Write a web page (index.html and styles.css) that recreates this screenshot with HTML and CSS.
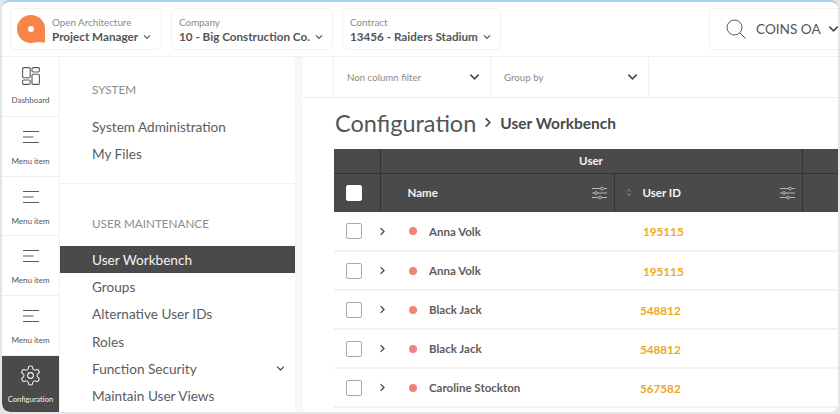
FILE: index.html
```html
<!DOCTYPE html>
<html lang="en">
<head>
    <meta charset="UTF-8">
    <title>Configuration - User Workbench</title>
    <link rel="stylesheet" href="styles.css">
</head>
<body>
    <svg class="defs" width="0" height="0">
        <symbol id="chev-down" viewBox="0 0 12 8"><path d="M1.5 1.5 6 6l4.5-4.5" fill="none" stroke="currentColor" stroke-width="1.8"/></symbol>
        <symbol id="chev-right" viewBox="0 0 8 12"><path d="M1.5 1.5 6 6l-4.5 4.5" fill="none" stroke="currentColor" stroke-width="1.8"/></symbol>
        <symbol id="burger" viewBox="0 0 18 14"><path d="M1 1.5h16M1 7h10.5M1 12.5h16" fill="none" stroke="currentColor" stroke-width="1.2"/></symbol>
        <symbol id="sliders" viewBox="0 0 15 14">
            <g fill="none" stroke="currentColor" stroke-width="1">
                <path d="M0 2.5h15M0 7h15M0 11.5h15"/>
                <circle cx="10" cy="2.5" r="1.4" fill="#4a4a4a"/>
                <circle cx="4" cy="7" r="1.4" fill="#4a4a4a"/>
                <circle cx="8" cy="11.5" r="1.4" fill="#4a4a4a"/>
            </g>
        </symbol>
    </svg>

    <div class="window">
        <header class="topbar">
            <div class="picker picker-role">
                <svg class="logo" viewBox="0 0 28 28">
                    <defs>
                        <radialGradient id="logoFade" cx="0.62" cy="1" r="0.5">
                            <stop offset="0" stop-color="#fff"/>
                            <stop offset="1" stop-color="#f98447"/>
                        </radialGradient>
                    </defs>
                    <path d="M0 14a14 14 0 0 1 28 0v14H14A14 14 0 0 1 0 14z" fill="#f98447"/>
                    <path d="M14 17v11h14v-1H19a6 6 0 0 1-5-10z" fill="url(#logoFade)"/>
                    <circle cx="14" cy="14" r="3" fill="#fff"/>
                </svg>
                <div class="picker-text">
                    <span class="picker-label">Open Architecture</span>
                    <span class="picker-value">Project Manager <svg class="chev"><use href="#chev-down"/></svg></span>
                </div>
            </div>
            <div class="picker picker-company">
                <div class="picker-text">
                    <span class="picker-label">Company</span>
                    <span class="picker-value">10 - Big Construction Co. <svg class="chev"><use href="#chev-down"/></svg></span>
                </div>
            </div>
            <div class="picker picker-contract">
                <div class="picker-text">
                    <span class="picker-label">Contract</span>
                    <span class="picker-value">13456 - Raiders Stadium <svg class="chev"><use href="#chev-down"/></svg></span>
                </div>
            </div>
            <div class="search">
                <svg class="search-icon" viewBox="0 0 20 20"><circle cx="8.5" cy="8.5" r="7.5" fill="none" stroke="currentColor" stroke-width="1"/><path d="m14 14 5.5 5.5" fill="none" stroke="currentColor" stroke-width="1"/></svg>
                <span class="search-text">COINS OA</span>
                <svg class="chev-lg"><use href="#chev-down"/></svg>
            </div>
        </header>

        <div class="body">
            <nav class="rail">
                <a class="rail-item rail-first">
                    <svg class="rail-icon" viewBox="0 0 18 18">
                        <g fill="none" stroke="currentColor" stroke-width="1.1">
                            <rect x="0.6" y="0.6" width="7.6" height="10.2" rx="1.2"/>
                            <rect x="0.6" y="13" width="7.6" height="4.4" rx="1.2"/>
                            <rect x="10" y="0.6" width="7.4" height="4.4" rx="1.2"/>
                            <rect x="10" y="7.2" width="7.4" height="10.2" rx="1.2"/>
                        </g>
                    </svg>
                    <span>Dashboard</span>
                </a>
                <a class="rail-item"><svg class="rail-icon burger"><use href="#burger"/></svg><span>Menu item</span></a>
                <a class="rail-item"><svg class="rail-icon burger"><use href="#burger"/></svg><span>Menu item</span></a>
                <a class="rail-item"><svg class="rail-icon burger"><use href="#burger"/></svg><span>Menu item</span></a>
                <a class="rail-item"><svg class="rail-icon burger"><use href="#burger"/></svg><span>Menu item</span></a>
                <a class="rail-item rail-active">
                    <svg class="rail-icon gear" viewBox="0 0 24 24">
                        <path d="M12.22 2h-.44a2 2 0 0 0-2 2v.18a2 2 0 0 1-1 1.73l-.43.25a2 2 0 0 1-2 0l-.15-.08a2 2 0 0 0-2.73.73l-.22.38a2 2 0 0 0 .73 2.73l.15.1a2 2 0 0 1 1 1.72v.51a2 2 0 0 1-1 1.74l-.15.09a2 2 0 0 0-.73 2.73l.22.38a2 2 0 0 0 2.73.73l.15-.08a2 2 0 0 1 2 0l.43.25a2 2 0 0 1 1 1.73V20a2 2 0 0 0 2 2h.44a2 2 0 0 0 2-2v-.18a2 2 0 0 1 1-1.73l.43-.25a2 2 0 0 1 2 0l.15.08a2 2 0 0 0 2.73-.73l.22-.39a2 2 0 0 0-.73-2.73l-.15-.08a2 2 0 0 1-1-1.74v-.5a2 2 0 0 1 1-1.74l.15-.09a2 2 0 0 0 .73-2.73l-.22-.38a2 2 0 0 0-2.73-.73l-.15.08a2 2 0 0 1-2 0l-.43-.25a2 2 0 0 1-1-1.73V4a2 2 0 0 0-2-2z" fill="none" stroke="currentColor" stroke-width="1.1"/>
                        <circle cx="12" cy="12" r="3" fill="none" stroke="currentColor" stroke-width="1.1"/>
                    </svg>
                    <span>Configuration</span>
                </a>
            </nav>

            <aside class="menu">
                <section class="menu-group">
                    <h3>SYSTEM</h3>
                    <a class="menu-link">System Administration</a>
                    <a class="menu-link">My Files</a>
                </section>
                <section class="menu-group menu-group-second">
                    <h3>USER MAINTENANCE</h3>
                    <a class="menu-link menu-active">User Workbench</a>
                    <a class="menu-link">Groups</a>
                    <a class="menu-link">Alternative User IDs</a>
                    <a class="menu-link">Roles</a>
                    <a class="menu-link">Function Security <svg class="chev"><use href="#chev-down"/></svg></a>
                    <a class="menu-link">Maintain User Views</a>
                </section>
            </aside>

            <main class="main">
                <div class="filters">
                    <div class="filter-spacer"></div>
                    <div class="filter filter-wide">Non column filter <svg class="chev-lg"><use href="#chev-down"/></svg></div>
                    <div class="filter filter-narrow">Group by <svg class="chev-lg"><use href="#chev-down"/></svg></div>
                </div>

                <div class="heading">
                    <h1>Configuration</h1>
                    <svg class="crumb-sep"><use href="#chev-right"/></svg>
                    <h2>User Workbench</h2>
                </div>

                <table class="grid">
                    <colgroup>
                        <col class="col-check">
                        <col class="col-name">
                        <col class="col-id">
                        <col class="col-rest">
                    </colgroup>
                    <thead>
                        <tr class="head-group">
                            <th></th>
                            <th colspan="2">User</th>
                            <th></th>
                        </tr>
                        <tr class="head-cols">
                            <th><span class="box box-head"></span></th>
                            <th>
                                <div class="head-cell head-name">Name <svg class="sliders"><use href="#sliders"/></svg></div>
                            </th>
                            <th>
                                <div class="head-cell head-id">
                                    <svg class="sort" viewBox="0 0 6 10"><path d="M1 4 3 1.5 5 4M1 6l2 2.5L5 6" fill="none" stroke="currentColor" stroke-width="0.8"/></svg>
                                    User ID
                                    <svg class="sliders"><use href="#sliders"/></svg>
                                </div>
                            </th>
                            <th></th>
                        </tr>
                    </thead>
                    <tbody id="rows"></tbody>
                </table>
            </main>
        </div>
    </div>

    <script>
        const usuarios = [
            ['Anna Volk', '195115', 'id-short'],
            ['Anna Volk', '195115', 'id-short'],
            ['Black Jack', '548812', ''],
            ['Black Jack', '548812', ''],
            ['Caroline Stockton', '567582', '']
        ];
        const rows = document.getElementById('rows');
        usuarios.forEach(u => {
            rows.innerHTML += `
                <tr>
                    <td><span class="box"></span></td>
                    <td>
                        <div class="user">
                            <svg class="expand"><use href="#chev-right"/></svg>
                            <span class="dot"></span>
                            <span class="user-name">${u[0]}</span>
                        </div>
                    </td>
                    <td class="user-id ${u[2]}">${u[1]}</td>
                    <td></td>
                </tr>
            `;
        });
    </script>
</body>
</html>
```

FILE: styles.css
```css
* {
    box-sizing: border-box;
}

html, body {
    margin: 0;
    height: 100%;
    overflow: hidden;
}

body {
    font-family: Lato, "Open Sans", sans-serif;
    background-color: #e6e6e6;
    color: #4a4a4a;
}

.defs {
    display: block;
    height: 0;
}

.window {
    width: 836px;
    height: 412px;
    margin-left: 2px;
    background: white;
    border-top: 2px solid #a5d0ef;
    border-radius: 8px;
    overflow: hidden;
    display: flex;
    flex-direction: column;
}

.topbar {
    height: 55px;
    flex: none;
    display: flex;
    padding: 6px 0 0 8px;
    border-bottom: 1px solid #f1f1f1;
}

.picker, .search {
    height: 42px;
    flex: none;
    border: 1px solid #f1f1f1;
    border-radius: 5px;
    display: flex;
    align-items: center;
}

.picker {
    margin-right: 9px;
}

.picker-role {
    width: 152px;
    padding-left: 6px;
}

.picker-company {
    width: 162px;
    padding-left: 7px;
}

.picker-contract {
    width: 159px;
    padding-left: 7px;
}

.logo {
    width: 28px;
    height: 28px;
    margin-right: 7px;
    flex: none;
}

.picker-text {
    display: flex;
    flex-direction: column;
    white-space: nowrap;
}

.picker-label {
    font-size: 9.8px;
    line-height: 14px;
    color: #8a8a8a;
}

.picker-value {
    font-size: 11.7px;
    line-height: 15px;
    font-weight: 700;
    color: #555;
}

.chev {
    width: 8px;
    height: 6px;
    margin-left: 2px;
    vertical-align: 1px;
    color: #555;
}

.chev-lg {
    width: 11px;
    height: 8px;
    color: #4a4a4a;
    flex: none;
}

.search {
    width: 131px;
    margin-left: 199px;
    padding-left: 16px;
    border-right: none;
    border-radius: 5px 0 0 5px;
}

.search-icon {
    width: 20px;
    height: 20px;
    color: #555;
    flex: none;
}

.search-text {
    margin: 0 7px 0 10px;
    font-size: 13.6px;
    white-space: nowrap;
    color: #555;
}

.body {
    flex: 1;
    display: flex;
    min-height: 0;
}

.rail {
    width: 58px;
    flex: none;
    display: flex;
    flex-direction: column;
    border-right: 1px solid #f1f1f1;
}

.rail-item {
    height: 59.8px;
    flex: none;
    display: flex;
    flex-direction: column;
    align-items: center;
    padding-top: 10px;
    border-bottom: 1px solid #efefef;
    font-size: 8px;
    color: #555;
}

.rail-item span {
    line-height: 12px;
}

.rail-icon {
    width: 18px;
    height: 18px;
    margin-bottom: 7px;
    color: #5a5a5a;
}

.rail-first .rail-icon {
    margin-bottom: 9px;
}

.burger {
    width: 18px;
    height: 14px;
    margin: 3px 0 11px;
}

.rail-active {
    flex: 1;
    background: #4a4a4a;
    color: #f2f2f2;
    border-bottom: none;
    border-bottom-left-radius: 8px;
    padding-top: 8px;
    font-size: 7.6px;
}

.gear {
    width: 23px;
    height: 23px;
    margin-bottom: 6px;
    color: #f2f2f2;
}

.menu {
    width: 235px;
    flex: none;
    overflow: hidden;
}

.menu-group {
    height: 127px;
    border-bottom: 1px solid #f1f1f1;
    padding-top: 25px;
}

.menu-group-second {
    height: auto;
    border-bottom: none;
    padding-top: 32px;
}

.menu-group h3 {
    margin: 0 0 17px 32px;
    font-size: 11.7px;
    line-height: 14px;
    font-weight: 400;
    color: #8c8c8c;
}

.menu-group-second h3 {
    margin-bottom: 16px;
}

.menu-link {
    height: 27.3px;
    padding: 0 10px 0 32px;
    display: flex;
    align-items: center;
    justify-content: space-between;
    font-size: 13.6px;
    color: #5c5c5c;
    white-space: nowrap;
}

.menu-active {
    background: #4a4a4a;
    color: #f4f4f4;
}

.menu-link .chev {
    width: 9px;
    height: 7px;
}

.main {
    flex: 1;
    min-width: 0;
    border-left: 8px solid #f6f7f9;
    overflow: hidden;
}

.filters {
    height: 41px;
    display: flex;
    border-bottom: 1px solid #ededed;
}

.filter-spacer {
    width: 31px;
    border-right: 1px solid #f1f1f1;
}

.filter {
    display: flex;
    align-items: center;
    justify-content: space-between;
    padding: 0 10px 0 13px;
    border-right: 1px solid #f1f1f1;
    font-size: 9.7px;
    color: #8a8a8a;
}

.filter-wide {
    width: 157px;
}

.filter-narrow {
    width: 158px;
}

.heading {
    height: 50px;
    display: flex;
    align-items: center;
    padding: 0 0 1px 32px;
}

.heading h1 {
    margin: 0 8px 0 0;
    font-size: 23.5px;
    font-weight: 400;
    color: #555;
}

.heading h2 {
    margin: 0;
    font-size: 15.5px;
    font-weight: 700;
    color: #4a4a4a;
}

.crumb-sep {
    width: 8px;
    height: 11px;
    margin-right: 8px;
    color: #4a4a4a;
}

.grid {
    margin: 1px 0 0 31px;
    width: 506px;
    table-layout: fixed;
    border-collapse: collapse;
}

.col-check {
    width: 46px;
}

.col-name {
    width: 234px;
}

.col-id {
    width: 188px;
}

.col-rest {
    width: 38px;
}

.grid thead {
    background: #4a4a4a;
    color: #f4f4f4;
}

.grid th {
    padding: 0;
    font-weight: 700;
    font-size: 11.5px;
    border-left: 1px solid #333;
}

.grid th:first-child {
    border-left: none;
}

.head-group {
    height: 24px;
    border-bottom: 1px solid #333;
}

.head-cols {
    height: 39px;
}

.head-cols th:first-child {
    text-align: left;
    padding-left: 12px;
}

.head-cell {
    display: flex;
    align-items: center;
    font-size: 11.5px;
}

.head-name {
    padding: 0 7px 0 27px;
    justify-content: space-between;
}

.head-id {
    padding: 0 7px 0 11px;
}

.sort {
    width: 6px;
    height: 9px;
    margin-right: 11px;
    color: #aaa;
}

.head-id .sliders {
    margin-left: auto;
}

.sliders {
    width: 15px;
    height: 14px;
    color: #b5b5b5;
}

.box {
    display: block;
    width: 16px;
    height: 16px;
    background: white;
    border: 1.5px solid #aaa;
    border-radius: 2px;
}

.box-head {
    border-color: white;
}

.grid tbody tr {
    height: 39px;
    border-bottom: 2px solid #f2f2f2;
}

.grid td {
    padding: 0;
}

.grid td:first-child {
    padding-left: 12px;
}

.user {
    display: flex;
    align-items: center;
    font-size: 11.5px;
    font-weight: 700;
    color: #5c5c5c;
}

.expand {
    width: 7px;
    height: 9px;
    flex: none;
    color: #4a4a4a;
    margin: 0 23px 0 -1px;
}

.dot {
    width: 8px;
    height: 8px;
    flex: none;
    background: #f4827a;
    border-radius: 50%;
    margin-right: 12px;
}

.user-name {
    white-space: nowrap;
}

.user-id {
    font-size: 11.7px;
    font-weight: 700;
    color: #eea71f;
    padding-left: 26px !important;
}

.id-short {
    padding-left: 29px !important;
}
```
